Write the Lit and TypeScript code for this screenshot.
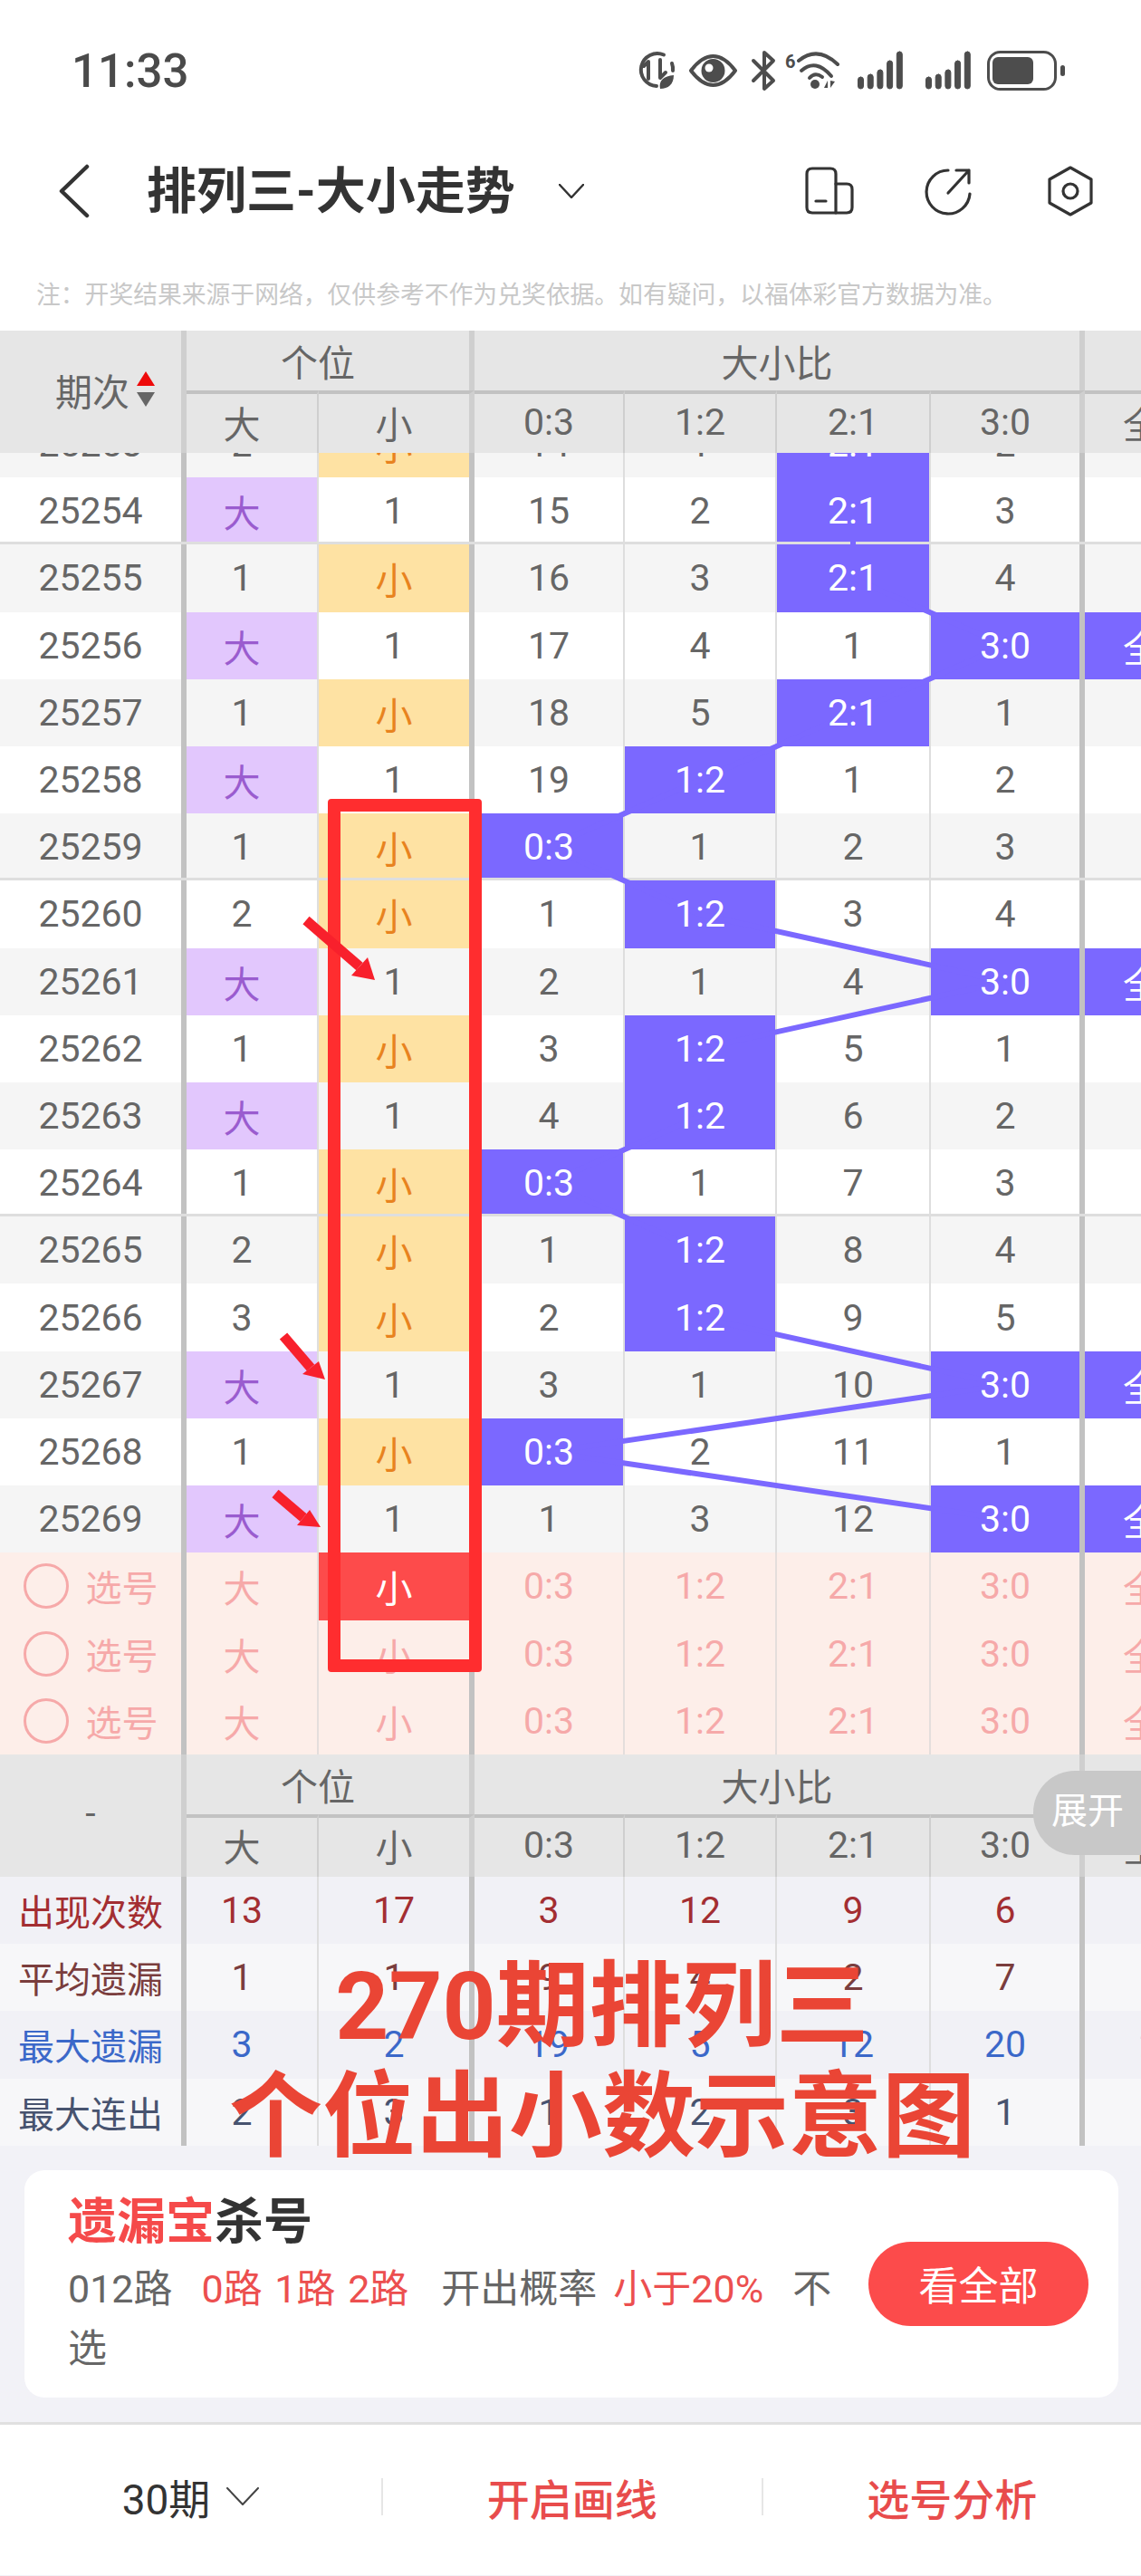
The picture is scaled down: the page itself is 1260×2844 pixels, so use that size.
import { LitElement, html, css, svg } from 'lit';
import { customElement } from 'lit/decorators.js';

const ROW_H = 74.2;
const SCROLL = 47;
// 走势线连接的单元格中心 x
const COL_X = [606, 773, 942, 1110];

type Row = [string, string, string, string, string, string, string, boolean?];

const ROWS: Row[] = [
  ['25253', '2', '小', '14', '1', '2:1', '2'],
  ['25254', '大', '1', '15', '2', '2:1', '3'],
  ['25255', '1', '小', '16', '3', '2:1', '4'],
  ['25256', '大', '1', '17', '4', '1', '3:0', true],
  ['25257', '1', '小', '18', '5', '2:1', '1'],
  ['25258', '大', '1', '19', '1:2', '1', '2'],
  ['25259', '1', '小', '0:3', '1', '2', '3'],
  ['25260', '2', '小', '1', '1:2', '3', '4'],
  ['25261', '大', '1', '2', '1', '4', '3:0', true],
  ['25262', '1', '小', '3', '1:2', '5', '1'],
  ['25263', '大', '1', '4', '1:2', '6', '2'],
  ['25264', '1', '小', '0:3', '1', '7', '3'],
  ['25265', '2', '小', '1', '1:2', '8', '4'],
  ['25266', '3', '小', '2', '1:2', '9', '5'],
  ['25267', '大', '1', '3', '1', '10', '3:0', true],
  ['25268', '1', '小', '0:3', '2', '11', '1'],
  ['25269', '大', '1', '1', '3', '12', '3:0', true],
];

const STATS = [
  { label: '出现次数', cls: 's1', vals: ['13', '17', '3', '12', '9', '6', ''] },
  { label: '平均遗漏', cls: 's2', vals: ['1', '1', '9', '4', '2', '7', ''] },
  { label: '最大遗漏', cls: 's3', vals: ['3', '2', '19', '5', '12', '20', '20'] },
  { label: '最大连出', cls: 's4', vals: ['2', '3', '1', '2', '3', '1', ''] },
];

// 红色标注箭头: 尾, 箭头两角, 尖
const ARROWS = [
  { tail: [338, 1016], a: [388, 1077], b: [406, 1057], tip: [414, 1082] },
  { tail: [313, 1475], a: [334, 1517], b: [352, 1503], tip: [359, 1523] },
  { tail: [304, 1649], a: [328, 1684], b: [342, 1667], tip: [354, 1686] },
];

@customElement('app-root')
export class AppRoot extends LitElement {
  static styles = css`
    :host {
      display: block;
      position: relative;
      width: 1260px;
      height: 2844px;
      overflow: hidden;
      background: #f2f2f7;
      font-family: Roboto, "Noto Sans CJK SC", sans-serif;
      color: #666;
    }
    .top { background: #fff; }
    .status {
      height: 130px;
      box-sizing: border-box;
      padding: 50px 80px 0 79px;
      display: flex;
      justify-content: space-between;
      align-items: flex-start;
    }
    .time { font-size: 51px; line-height: 58px; font-weight: 500; color: #4a4a4a; }
    .status svg { display: block; width: 480px; height: 56px; }
    .nav {
      height: 162px;
      display: flex;
      align-items: center;
      padding: 0 52px 0 60px;
    }
    .nav svg { display: block; flex: none; }
    .title {
      margin-left: 58px;
      font-size: 55px;
      font-weight: 700;
      color: #333;
      line-height: 60px;
    }
    .drop { margin-left: 48px; }
    .actions { margin-left: auto; display: flex; align-items: center; gap: 77px; }
    .actions .share { margin-right: 5px; }
    .note {
      height: 73px;
      box-sizing: border-box;
      padding: 9px 0 0 40px;
      font-size: 26.8px;
      line-height: 50px;
      color: #c8c8c8;
    }

    .grid {
      display: grid;
      grid-template-columns: 206px 146px 172px 166px 168px 170px 170px 168px;
      width: 1366px;
    }
    .cell {
      box-sizing: border-box;
      display: flex;
      align-items: center;
      justify-content: center;
      font-size: 41px;
      border-right: 2px solid #dedede;
      min-width: 0;
      white-space: nowrap;
    }
    .cell.thick { border-right: 6px solid #c2c2c2; }
    .cell.pr { padding-right: 22px; }
    .t { position: relative; z-index: 2; }

    .head { background: #e6e6e6; height: 135px; grid-template-rows: 66px 69px; }
    .head .cell { color: #666; border-right-color: #cfcfcf; }
    .head .first { grid-row: 1 / span 2; }
    .head .sub { border-top: 4px solid #c2c2c2; padding-bottom: 4px; }
    .head .group { grid-column: span 2; }
    .head .group.wide { grid-column: span 4; }
    .head .first { gap: 8px; padding: 0 0 5px 32px; }
    .head .first.plain { padding-left: 0; }
    .sort { display: block; }

    .body { position: relative; height: 1214.4px; overflow: hidden; }
    .rows { margin-top: -${SCROLL}px; }
    .row { height: ${ROW_H}px; box-sizing: border-box; background: #fff; }
    .row.gray { background: #f5f5f5; }
    .row.sep { border-bottom: 3px solid #dedede; }
    .row.sep .cell { padding-top: 3px; }
    .cell.big { background: #e2c7fd; color: #9a5ccf; }
    .cell.small { background: #fee2a3; color: #e8831f; }
    .cell.hit { background: #7b68ff; color: #fff; }
    .lines { position: absolute; left: 0; top: 0; z-index: 1; width: 1260px; height: 1215px; }

    .select { height: ${ROW_H}px; background: #fdeee9; }
    .select .cell { color: #f6a9a9; border-right-color: #e4dedc; }
    .select .cell.thick { border-right-color: #c2c2c2; }
    .select .cell.picked { background: #fd4b4b; color: #fff; }
    .pick { gap: 19px; font-size: 40px; }
    .ring {
      width: 50px;
      height: 50px;
      box-sizing: border-box;
      border: 3px solid #f6a9a9;
      border-radius: 50%;
    }

    .stat { height: ${ROW_H}px; background: #f7f7f9; }
    .stat.odd { background: #f1f1f6; }
    .stat .first { font-size: 40px; }
    .s1 .cell { color: #a32e32; }
    .s2 .cell { color: #7a3d3d; }
    .s3 .cell { color: #3b68c9; }
    .s4 .cell { color: #47536f; }

    .card {
      margin: 27px 25px 27px 27px;
      height: 251px;
      box-sizing: border-box;
      padding: 0 33px 0 48px;
      border-radius: 22px;
      background: #fff;
      display: flex;
      align-items: center;
      gap: 34px;
    }
    .card-text { flex: 1; min-width: 0; padding-top: 8px; }
    .card-title { font-size: 54px; line-height: 60px; font-weight: 700; color: #333; }
    .red { color: #f54a4a; }
    .card-line {
      margin-top: 10px;
      font-size: 43px;
      line-height: 66px;
      word-spacing: 3px;
      color: #666;
      height: 132px;
    }
    .card-line .red { color: #ec4f4f; }
    .m1 { margin-left: 32px; }
    .m2 { margin-left: 36px; }
    .m3 { margin-left: 18px; }
    .m4 { margin-left: 32px; }
    .btn {
      flex: none;
      width: 243px;
      height: 93px;
      border-radius: 47px;
      background: #fc4b4b;
      color: #fff;
      font-size: 44px;
      display: flex;
      align-items: center;
      justify-content: center;
    }
    .bar {
      border-top: 3px solid #e0e0e0;
      height: 169px;
      box-sizing: border-box;
      padding-bottom: 7px;
      background: #fff;
      display: flex;
      align-items: center;
    }
    .tab {
      flex: 1;
      height: 41px;
      display: flex;
      align-items: center;
      justify-content: center;
      gap: 18px;
      font-size: 47px;
      color: #e84c4c;
      font-weight: 500;
      border-left: 2px solid #e6e6e6;
    }
    .tab.first { flex: none; width: 421px; border-left: none; color: #333; font-weight: 400; font-size: 46px; }

    .expand {
      position: absolute;
      left: 1141px;
      top: 1955px;
      width: 119px;
      height: 93px;
      box-sizing: border-box;
      padding-left: 20px;
      border-radius: 46px 0 0 46px;
      background: #c8c8c8;
      color: #fff;
      font-size: 40px;
      line-height: 90px;
      z-index: 4;
    }
    .box {
      position: absolute;
      left: 362px;
      top: 882px;
      width: 170px;
      height: 964px;
      box-sizing: border-box;
      border: 14px solid #ff2d2f;
      border-radius: 4px;
      z-index: 5;
    }
    .marks { position: absolute; left: 0; top: 0; width: 1260px; height: 2844px; z-index: 5; pointer-events: none; }
    .headline {
      position: absolute;
      left: 0;
      top: 2155px;
      width: 1330px;
      text-align: center;
      font-size: 103px;
      line-height: 122px;
      font-weight: 700;
      color: #ea4535;
      z-index: 6;
    }
  `;

  private statusIcons() {
    const bars = (x: number) => [85, 82, 77, 67, 57].map((y, i) => svg`
      <rect x=${x + i * 10.7} y=${y} width="6" height=${98 - y} rx="3" fill="#4d4d4d"></rect>`);
    return html`<svg viewBox="700 50 480 56" fill="none" stroke="#4d4d4d" stroke-linecap="round" stroke-linejoin="round">
      <path d="M733 60.5 A18 18 0 1 0 725 95" stroke-width="4"></path>
      <path d="M742 70 A18 18 0 0 1 743 78" stroke-width="4"></path>
      <path d="M716 87 V68 L711 73 M729 66 V86 L735 80" stroke-width="4"></path>
      <path d="M729 98 C727 89 733 84 744 83 C744 93 738 98 729 98 Z" fill="#4d4d4d" stroke="none"></path>
      <path d="M763 78 C772 66 780 62 787.5 62 C795 62 803 66 812 78 C803 90 795 94 787.5 94 C780 94 772 90 763 78 Z" stroke-width="4"></path>
      <circle cx="787.5" cy="78" r="13" fill="#4d4d4d" stroke="none"></circle>
      <circle cx="783" cy="75" r="4.5" fill="#fff" stroke="none"></circle>
      <path d="M832 67 L854 89 L844 98 V80 M844 76 V58 L854 67 L832 89" stroke-width="4"></path>
      <text x="867" y="75" font-family="Roboto" font-weight="700" font-size="20" fill="#4d4d4d" stroke="none">6</text>
      <path d="M882 67 Q903 50 925 71" stroke-width="4"></path>
      <path d="M885 78 Q901 64 918 84" stroke-width="4"></path>
      <path d="M894 86 Q900 79 908 85" stroke-width="4"></path>
      <circle cx="900" cy="93" r="5" fill="#4d4d4d" stroke="none"></circle>
      <path d="M910 97 L914 89 V97 Z M917 89 V97 L922 90 Z" fill="#4d4d4d" stroke="none"></path>
      ${bars(947.5)}
      ${bars(1022.5)}
      <rect x="1091.5" y="57.5" width="74" height="41" rx="13" stroke-width="3"></rect>
      <rect x="1096" y="63" width="45" height="30" rx="6" fill="#4d4d4d" stroke="none"></rect>
      <rect x="1171" y="72" width="5" height="12" rx="2.5" fill="#4d4d4d" stroke="none"></rect>
    </svg>`;
  }

  private navBar() {
    return html`<div class="nav">
      <svg width="44" height="60" viewBox="0 0 44 60" fill="none" stroke="#333" stroke-width="4.5" stroke-linecap="round" stroke-linejoin="round">
        <path d="M36 3 L8 30 L36 57"></path>
      </svg>
      <div class="title">排列三-大小走势</div>
      <svg class="drop" width="28" height="16" viewBox="0 0 28 16" fill="none" stroke="#333" stroke-width="2.5" stroke-linecap="round" stroke-linejoin="round">
        <path d="M1 1 L14 15 L27 1"></path>
      </svg>
      <div class="actions">
        <svg width="54" height="54" viewBox="0 0 54 54" fill="none" stroke="#333" stroke-width="3.2" stroke-linecap="round" stroke-linejoin="round">
          <path d="M8 2 H28 Q34 2 34 8 V51 H8 Q2 51 2 45 V8 Q2 2 8 2 Z"></path>
          <path d="M34 19 H46 Q52 19 52 25 V45 Q52 51 46 51 H34"></path>
          <path d="M12 38 H23"></path>
        </svg>
        <svg class="share" width="54" height="54" viewBox="0 0 54 54" fill="none" stroke="#333" stroke-width="3.2" stroke-linecap="round" stroke-linejoin="round">
          <path d="M27 4 A24 24 0 1 0 51 30"></path>
          <path d="M27 29 L50 4 M36 4 H50 V18"></path>
        </svg>
        <svg width="52" height="56" viewBox="0 0 52 56" fill="none" stroke="#333" stroke-width="3.2" stroke-linecap="round" stroke-linejoin="round">
          <path d="M26 2 L49 15 V41 L26 54 L3 41 V15 Z"></path>
          <circle cx="26" cy="28" r="8"></circle>
        </svg>
      </div>
    </div>`;
  }

  private headBlock(first: unknown, plain = false) {
    return html`<div class="grid head">
      <div class="cell thick first ${plain ? 'plain' : ''}">${first}</div>
      <div class="cell thick group pr">个位</div>
      <div class="cell thick group wide">大小比</div>
      <div class="cell"></div>
      <div class="cell sub pr">大</div>
      <div class="cell sub thick">小</div>
      <div class="cell sub">0:3</div>
      <div class="cell sub">1:2</div>
      <div class="cell sub">2:1</div>
      <div class="cell sub thick">3:0</div>
      <div class="cell sub">全大</div>
    </div>`;
  }

  private dataRow(r: Row, i: number) {
    const [id, big, small, a, b, c, d, all] = r;
    const hit = (v: string) => (v.includes(':') ? 'hit' : '');
    const sep = i % 5 === 1 && i < ROWS.length - 1;
    return html`<div class="grid row ${i % 2 === 0 ? 'gray' : ''} ${sep ? 'sep' : ''}">
      <div class="cell thick"><span class="t">${id}</span></div>
      <div class="cell pr ${big === '大' ? 'big' : ''}"><span class="t">${big}</span></div>
      <div class="cell thick ${small === '小' ? 'small' : ''}"><span class="t">${small}</span></div>
      <div class="cell ${hit(a)}"><span class="t">${a}</span></div>
      <div class="cell ${hit(b)}"><span class="t">${b}</span></div>
      <div class="cell ${hit(c)}"><span class="t">${c}</span></div>
      <div class="cell thick ${hit(d)}"><span class="t">${d}</span></div>
      <div class="cell ${all ? 'hit' : ''}"><span class="t">${all ? '全大' : ''}</span></div>
    </div>`;
  }

  // 把每期命中的格子连成折线
  private trendLine() {
    const pts = ROWS.map((r, i) => {
      const col = r.slice(3, 7).findIndex((v) => typeof v === 'string' && v.includes(':'));
      return `${COL_X[col]},${(i + 0.5) * ROW_H - SCROLL}`;
    }).join(' ');
    return html`<svg class="lines" viewBox="0 0 1260 1215" fill="none">
      <polyline points=${pts} stroke="#7b68ff" stroke-width="6"></polyline>
    </svg>`;
  }

  private selectRow(picked: boolean) {
    return html`<div class="grid select">
      <div class="cell thick pick"><span class="ring"></span><span>选号</span></div>
      <div class="cell pr">大</div>
      <div class="cell thick ${picked ? 'picked' : ''}">小</div>
      <div class="cell">0:3</div>
      <div class="cell">1:2</div>
      <div class="cell">2:1</div>
      <div class="cell thick">3:0</div>
      <div class="cell">全大</div>
    </div>`;
  }

  private statRow(s: (typeof STATS)[number], i: number) {
    const v = s.vals;
    return html`<div class="grid stat ${s.cls} ${i % 2 === 0 ? 'odd' : ''}">
      <div class="cell thick first">${s.label}</div>
      <div class="cell pr">${v[0]}</div>
      <div class="cell thick">${v[1]}</div>
      <div class="cell">${v[2]}</div>
      <div class="cell">${v[3]}</div>
      <div class="cell">${v[4]}</div>
      <div class="cell thick">${v[5]}</div>
      <div class="cell">${v[6]}</div>
    </div>`;
  }

  private arrows() {
    return html`<svg class="marks" viewBox="0 0 1260 2844">
      ${ARROWS.map(({ tail, a, b, tip }) => svg`
        <line x1=${tail[0]} y1=${tail[1]} x2=${(a[0] + b[0]) / 2} y2=${(a[1] + b[1]) / 2} stroke="#f8202c" stroke-width="11"></line>
        <polygon points="${a.join(',')} ${b.join(',')} ${tip.join(',')}" fill="#f8202c"></polygon>`)}
    </svg>`;
  }

  render() {
    return html`
      <div class="top">
        <div class="status">
          <div class="time">11:33</div>
          ${this.statusIcons()}
        </div>
        ${this.navBar()}
        <div class="note">注：开奖结果来源于网络，仅供参考不作为兑奖依据。如有疑问，以福体彩官方数据为准。</div>
      </div>

      ${this.headBlock(html`<span>期次</span>
        <svg class="sort" width="20" height="40" viewBox="0 0 20 40">
          <path d="M10 0 L20 16 H0 Z" fill="#ee0a0a"></path>
          <path d="M10 39 L20 23 H0 Z" fill="#666"></path>
        </svg>`)}
      <div class="body">
        <div class="rows">${ROWS.map((r, i) => this.dataRow(r, i))}</div>
        ${this.trendLine()}
      </div>
      ${this.selectRow(true)}
      ${this.selectRow(false)}
      ${this.selectRow(false)}
      ${this.headBlock('-', true)}
      ${STATS.map((s, i) => this.statRow(s, i))}

      <div class="card">
        <div class="card-text">
          <div class="card-title"><span class="red">遗漏宝</span>杀号</div>
          <div class="card-line">012路<span class="red m1">0路 1路 2路</span><span class="m2">开出概率</span><span class="red m3">小于20%</span><span class="m4">不选</span></div>
        </div>
        <div class="btn">看全部</div>
      </div>

      <div class="bar">
        <div class="tab first">
          <span>30期</span>
          <svg width="36" height="20" viewBox="0 0 36 20" fill="none" stroke="#444" stroke-width="2" stroke-linecap="round" stroke-linejoin="round">
            <path d="M1 1 L18 19 L35 1"></path>
          </svg>
        </div>
        <div class="tab">开启画线</div>
        <div class="tab">选号分析</div>
      </div>

      <div class="expand">展开</div>
      <div class="box"></div>
      ${this.arrows()}
      <div class="headline">270期排列三<br />个位出小数示意图</div>
    `;
  }
}
